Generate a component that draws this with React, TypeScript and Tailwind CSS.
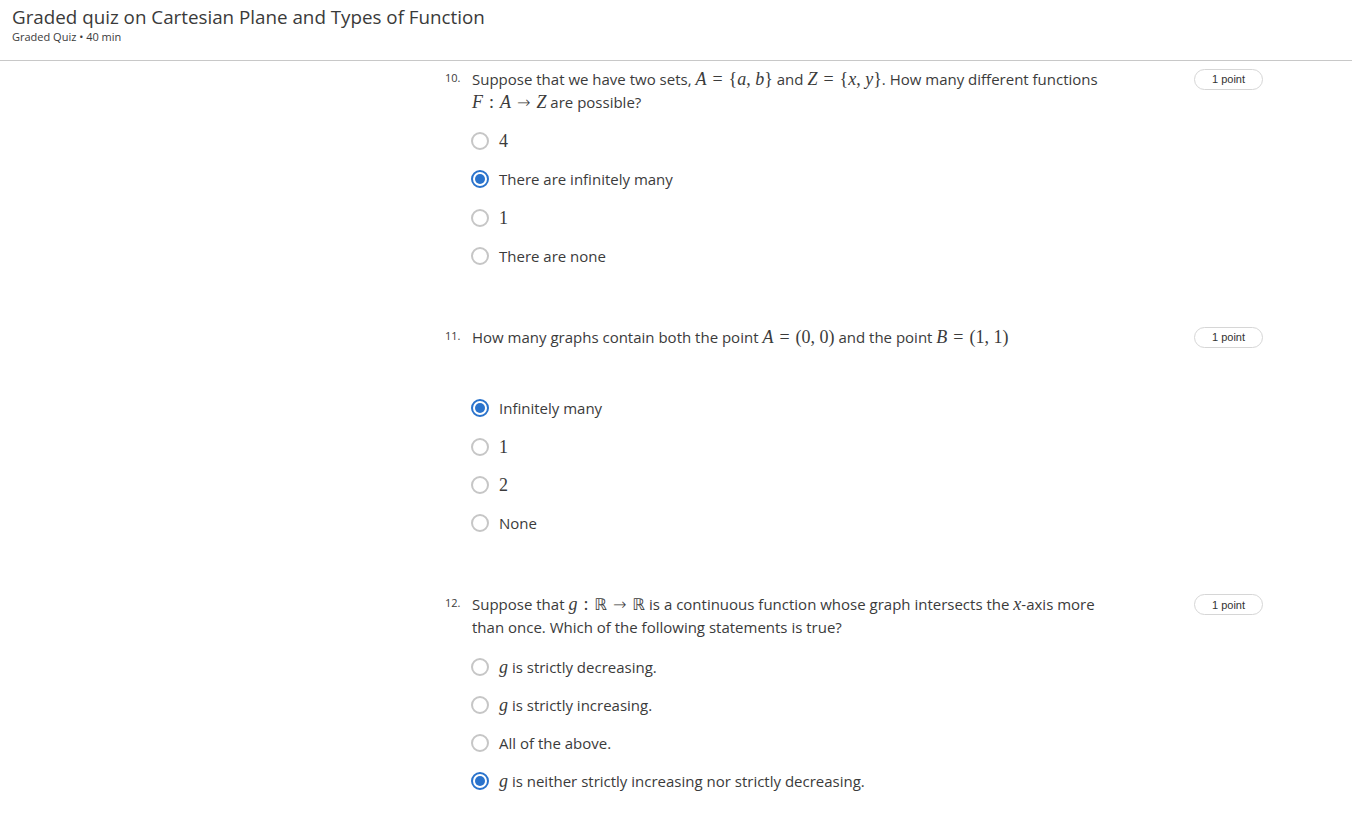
import React from "react";

const Radio = ({ checked }: { checked?: boolean }) =>
  checked ? (
    <span className="flex h-[18px] w-[18px] shrink-0 items-center justify-center rounded-full border-2 border-[#2a73cc]">
      <span className="h-[10px] w-[10px] rounded-full bg-[#2a73cc]" />
    </span>
  ) : (
    <span className="h-[18px] w-[18px] shrink-0 rounded-full border-2 border-[#c6c6c6]" />
  );

// math pieces, roughly KaTeX-looking
const I = ({ children }: { children: React.ReactNode }) => (
  <span className="font-['Liberation_Serif'] text-[18px] leading-none italic">
    {children}
  </span>
);
const R = ({ children }: { children: React.ReactNode }) => (
  <span className="font-['Liberation_Serif'] text-[18px] leading-none">{children}</span>
);
// relation symbol with thick spaces around it
const Rel = ({ children }: { children: React.ReactNode }) => (
  <span className="mx-[6px] font-['Liberation_Serif'] text-[18px] leading-none">
    {children}
  </span>
);
const Arrow = () => (
  <span className="mx-[6px] font-['DejaVu_Sans'] text-[16px] leading-none font-light">→</span>
);
const BB = () => (
  <span className="font-['DejaVu_Sans'] text-[16px] leading-none">ℝ</span>
);

const Option = ({
  checked,
  children,
}: {
  checked?: boolean;
  children: React.ReactNode;
}) => (
  <div className="-ml-px flex h-[38.3px] items-center gap-[10px]">
    <Radio checked={checked} />
    <span className="text-[15px] leading-[20px]">{children}</span>
  </div>
);

const Question = ({
  num,
  text,
  extraGap,
  children,
}: {
  num: string;
  text: React.ReactNode;
  extraGap?: boolean;
  children: React.ReactNode;
}) => (
  <div className="flex">
    <div className="w-[27px] pt-[1px] text-[11px] leading-[18px]">{num}</div>
    <div className="w-[650px]">
      <div className="text-[15px] leading-[23px]">{text}</div>
      <div className={extraGap ? "mt-[40px]" : "mt-[8px]"}>{children}</div>
    </div>
    <div className="flex-1" />
    <div className="mt-px flex h-[21px] w-[69px] items-center justify-center rounded-full border border-[#d6d6d6] font-['Liberation_Sans'] text-[11px] text-[#333]">
      1 point
    </div>
  </div>
);

export default function App() {
  return (
    <div className="min-h-screen bg-white font-['Open_Sans'] text-[#3b3b3b]">
      <div className="h-[61px] border-b border-[#c8c8c8] px-3 pt-[4px]">
        <h1 className="text-[18.8px] leading-[26px] text-[#3a3a3a]">
          Graded quiz on Cartesian Plane and Types of Function
        </h1>
        <p className="text-[11px] leading-[14px]">Graded Quiz • 40 min</p>
      </div>

      <div className="ml-[445px] flex w-[818px] flex-col gap-[51px] pt-[7px]">
        <Question
          num="10."
          text={
            <>
              Suppose that we have two sets, <I>A</I>
              <Rel>=</Rel>
              <R>{"{"}</R>
              <I>a</I>
              <R>, </R>
              <I>b</I>
              <R>{"}"}</R> and <I>Z</I>
              <Rel>=</Rel>
              <R>{"{"}</R>
              <I>x</I>
              <R>, </R>
              <I>y</I>
              <R>{"}"}</R>. How many different functions{" "}
              <span className="whitespace-nowrap">
                <I>F</I>
                <Rel>:</Rel>
                <I>A</I>
                <Arrow />
                <I>Z</I>
              </span>{" "}
              are possible?
            </>
          }
        >
          <Option>
            <R>4</R>
          </Option>
          <Option checked>There are infinitely many</Option>
          <Option>
            <R>1</R>
          </Option>
          <Option>There are none</Option>
        </Question>

        <Question
          num="11."
          extraGap
          text={
            <>
              How many graphs contain both the point <I>A</I>
              <Rel>=</Rel>
              <R>(0, 0)</R> and the point <I>B</I>
              <Rel>=</Rel>
              <R>(1, 1)</R>
            </>
          }
        >
          <Option checked>Infinitely many</Option>
          <Option>
            <R>1</R>
          </Option>
          <Option>
            <R>2</R>
          </Option>
          <Option>None</Option>
        </Question>

        <Question
          num="12."
          text={
            <>
              Suppose that <I>g</I>
              <Rel>:</Rel>
              <BB />
              <Arrow />
              <BB /> is a continuous function whose graph intersects the{" "}
              <I>x</I>-axis more than once. Which of the following statements
              is true?
            </>
          }
        >
          <Option>
            <I>g</I> is strictly decreasing.
          </Option>
          <Option>
            <I>g</I> is strictly increasing.
          </Option>
          <Option>All of the above.</Option>
          <Option checked>
            <I>g</I> is neither strictly increasing nor strictly decreasing.
          </Option>
        </Question>
      </div>
    </div>
  );
}
